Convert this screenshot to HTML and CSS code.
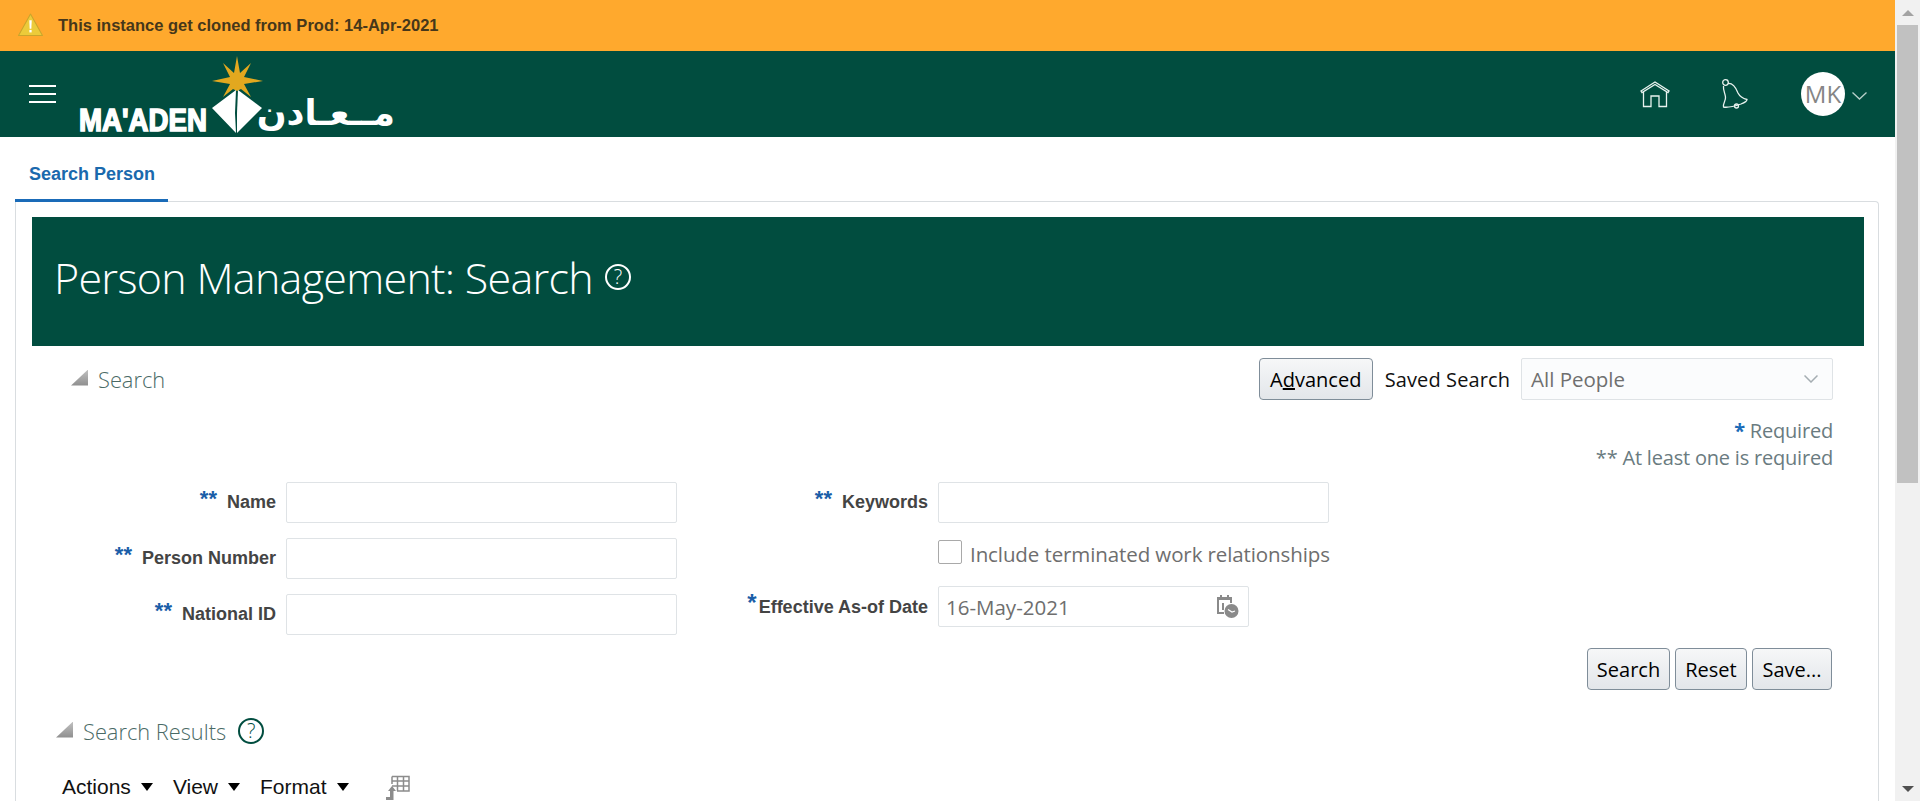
FILE: index.html
```html
<!DOCTYPE html>
<html lang="en">

<head>
    <meta charset="UTF-8">
    <title>Person Management: Search</title>
    <link rel="stylesheet" href="styles.css">
</head>

<body>
    <div class="page">
        <!-- notice -->
        <div class="notice">
            <svg class="notice-icon" viewBox="0 0 24 22" width="25" height="23">
                <path d="M12 1 L23.5 21.5 H0.5 Z" fill="#eccb3a" stroke="#c9a52c" stroke-width="1" stroke-linejoin="round"/>
                <path d="M10.8 7 H13.2 L12.8 15 H11.2 Z" fill="#fff"/>
                <rect x="10.9" y="16.2" width="2.2" height="2.4" fill="#fff"/>
            </svg>
            <span>This instance get cloned from Prod: 14-Apr-2021</span>
        </div>

        <!-- top bar -->
        <header class="topbar">
            <div class="menu-btn"><span></span><span></span><span></span></div>
            <svg class="logo" viewBox="0 0 330 86" width="330" height="86">
                <path fill="#e2a81f" d="M162 5 L165 22 L176 12 L169 26 L188 30 L169 33 L176 46 L166 38 L162 40 L158 38 L148 46 L155 33 L137 30 L155 26 L148 12 L159 22 Z"/>
                <path fill="#fff" d="M161 39 L137 57 L161 82 L160 62 Z"/>
                <path fill="#fff" d="M163 39 L187 57 L162 82 L162 62 Z"/>
                <text class="logo-en" x="4" y="80" textLength="128" lengthAdjust="spacingAndGlyphs">MA'ADEN</text>
                <text class="logo-ar" x="320" y="74" text-anchor="end">مــعـادن</text>
            </svg>
            <div class="top-actions">
                <svg class="home-icon" viewBox="0 0 30 27" width="30" height="27">
                    <path d="M1 10 L15 1 L29 10 L28 11.5 L15 3.5 L2 11.5 Z"/>
                    <path d="M3.5 11 V25.5 H11 V15 H19 V25.5 H26.500 V11"/>
                </svg>
                <svg class="bell-icon" viewBox="0 0 28 30" width="28" height="30">
                    <circle cx="4.500" cy="3.500" r="2.800"/>
                    <path d="M7 4.500 C12 4 15 9 17 14 C19 18 24 20 26 20.500 C26 22 24 23.500 20 25 C14 27 7 29 2.500 28 C1.500 25 5 22 4.500 18 C4 14 2 11 2.500 7"/>
                    <circle cx="15.500" cy="27" r="2"/>
                </svg>
                <div class="avatar">MK</div>
                <svg class="chevron-icon" viewBox="0 0 15 8" width="15" height="8">
                    <path d="M0.500 0.500 L7.500 7 L14.500 0.500"/>
                </svg>
            </div>
        </header>

        <nav class="tabs">
            <a class="tab-active">Search Person</a>
        </nav>

        <main class="panel">
            <div class="title-bar">
                <h1>Person Management: Search</h1>
                <span class="help help-light">?</span>
            </div>

            <section class="search-box">
                <div class="search-head">
                    <h2 class="section-title"><i class="disclosure"></i>Search</h2>
                    <div class="saved-search">
                        <button class="btn btn-advanced">A<u>d</u>vanced</button>
                        <span class="saved-label">Saved Search</span>
                        <div class="select">
                            <span>All People</span>
                            <svg viewBox="0 0 14 8" width="14" height="8"><path d="M0.500 0.500 L7 7 L13.500 0.500"/></svg>
                        </div>
                    </div>
                </div>

                <div class="legend">
                    <div><b>*</b> Required</div>
                    <div>** At least one is required</div>
                </div>

                <div class="form-grid">
                    <div class="form-col col-left">
                        <label class="field">
                            <span class="field-label"><b class="star">**</b>Name</span>
                            <input class="input" type="text">
                        </label>
                        <label class="field">
                            <span class="field-label"><b class="star">**</b>Person Number</span>
                            <input class="input" type="text">
                        </label>
                        <label class="field">
                            <span class="field-label"><b class="star">**</b>National ID</span>
                            <input class="input" type="text">
                        </label>
                    </div>
                    <div class="form-col col-right">
                        <label class="field">
                            <span class="field-label"><b class="star">**</b>Keywords</span>
                            <input class="input" type="text">
                        </label>
                        <div class="check-row">
                            <span class="checkbox"></span>
                            <span>Include terminated work relationships</span>
                        </div>
                        <label class="field">
                            <span class="field-label"><b class="star star-one">*</b>Effective As-of Date</span>
                            <div class="date-input">
                                <span>16-May-2021</span>
                                <svg viewBox="0 0 25 25" width="25" height="25">
                                    <path fill="#8a8a8a" d="M3 3 H6 V1 H8 V3 H13 V1 H15 V3 H18 V9 H16 V6 H5 V18 H10 V20 H3 Z"/>
                                    <path fill="#8a8a8a" d="M8 9 H10 V16 H8 Z"/>
                                    <circle cx="17.500" cy="17" r="7" fill="#8a8a8a"/>
                                    <path d="M14 15.500 L18 18 L21 17" fill="none" stroke="#fff" stroke-width="1.200"/>
                                </svg>
                            </div>
                        </label>
                    </div>
                </div>

                <div class="form-buttons">
                    <button class="btn btn-search">Search</button>
                    <button class="btn btn-reset">Reset</button>
                    <button class="btn btn-save">Save...</button>
                </div>
            </section>

            <section class="results">
                <div class="results-head">
                    <h2 class="section-title"><i class="disclosure"></i>Search Results</h2>
                    <span class="help help-dark">?</span>
                </div>
                <div class="toolbar">
                    <span class="tool">Actions<i class="caret"></i></span>
                    <span class="tool">View<i class="caret"></i></span>
                    <span class="tool">Format<i class="caret"></i></span>
                    <svg class="table-icon" viewBox="0 0 24 26" width="24" height="26">
                        <path fill="none" stroke="#8c8c8c" stroke-width="1.500" d="M6 1.500 H23 V16 H11 M6 1.500 V9 M6 6 H23 M11.500 1.500 V16 M17.500 1.500 V16 M6 11 H23"/>
                        <path fill="#8c8c8c" d="M0 22 H4 V16 H2 L6 11 L10 16 H7.500 V25 H0 Z"/>
                    </svg>
                </div>
            </section>
        </main>
    </div>

    <!-- scrollbar -->
    <aside class="scrollbar">
        <div class="scroll-btn"><i class="scroll-up"></i></div>
        <div class="scroll-track"><div class="scroll-thumb"></div></div>
        <div class="scroll-btn"><i class="scroll-down"></i></div>
    </aside>
</body>

</html>
```

FILE: styles.css
```css
/* page */
html, body {
    height: 100%;
}

body {
    margin: 0;
    display: flex;
    overflow: hidden;
    background-color: #fff;
    font-family: "Liberation Sans", Arial, sans-serif;
    color: #333;
}

.page {
    flex: 1;
    min-width: 0;
    height: 801px;
    overflow: hidden;
}

/* notice */
.notice {
    height: 51px;
    display: flex;
    align-items: center;
    padding-left: 18px;
    background-color: #ffa92d;
    color: #46371a;
    font-size: 16.5px;
    font-weight: bold;
}

.notice-icon {
    margin-right: 15px;
    margin-top: -3px;
}

/* top bar */
.topbar {
    height: 86px;
    display: flex;
    align-items: center;
    background-color: #014d3f;
}

.menu-btn {
    display: flex;
    flex-direction: column;
    gap: 6px;
    width: 27px;
    margin-left: 29px;
}

.menu-btn span {
    height: 2px;
    background-color: #fff;
}

.logo {
    margin-left: 19px;
    align-self: flex-start;
}

.logo-en {
    font-family: "Liberation Sans", Arial, sans-serif;
    font-size: 32px;
    font-weight: bold;
    fill: #fff;
    stroke: #fff;
    stroke-width: 1.6px;
}

.logo-ar {
    font-family: "DejaVu Sans", sans-serif;
    font-size: 35px;
    font-weight: bold;
    fill: #fff;
}

.top-actions {
    margin-left: auto;
    display: flex;
    align-items: center;
    padding-right: 28px;
}

.home-icon path, .bell-icon path, .bell-icon circle {
    fill: none;
    stroke: #e8f2ef;
    stroke-width: 1.3;
}

.bell-icon {
    margin-left: 51px;
}

.avatar {
    width: 44px;
    height: 44px;
    margin-left: 52px;
    border-radius: 50%;
    background-color: #fff;
    color: #858585;
    font-family: "Open Sans", sans-serif;
    font-size: 24px;
    line-height: 44px;
    text-align: center;
}

.chevron-icon {
    margin-left: 7px;
    margin-top: 4px;
}

.chevron-icon path {
    fill: none;
    stroke: #b7cfc9;
    stroke-width: 1.3;
}

/* tabs */
.tabs {
    height: 65px;
    margin: 0 16px 0 15px;
    box-sizing: border-box;
    display: flex;
}

.tab-active {
    width: 153px;
    box-sizing: border-box;
    padding: 27px 0 0 14px;
    border-bottom: 3px solid #1a6bb8;
    color: #1a69ad;
    font-size: 18px;
    font-weight: bold;
    line-height: 20px;
}

/* main panel */
.panel {
    margin: 0 16px 0 15px;
    height: 640px;
    box-sizing: border-box;
    padding: 15px 14px 0 16px;
    border: 1px solid #d9dde0;
    border-bottom: none;
    border-radius: 0 4px 0 0;
    margin-top: -1px;
}

.title-bar {
    height: 129px;
    display: flex;
    align-items: center;
    padding-left: 22px;
    padding-bottom: 9px;
    box-sizing: border-box;
    background-color: #014d3f;
    color: #fff;
}

h1 {
    margin: 0;
    font-family: "Open Sans", sans-serif;
    font-size: 43px;
    font-weight: 300;
    letter-spacing: -0.7px;
}

.help {
    display: block;
    border-radius: 50%;
    box-sizing: border-box;
    text-align: center;
    font-family: "Open Sans", sans-serif;
    font-weight: 300;
}

.help-light {
    width: 26px;
    height: 26px;
    margin-left: 12px;
    border: 2px solid #fff;
    font-size: 20px;
    line-height: 22px;
}

.help-dark {
    width: 26px;
    height: 26px;
    margin-left: 12px;
    border: 2px solid #014d3f;
    color: #014d3f;
    font-size: 20px;
    line-height: 22px;
}

.search-box {
    padding-top: 12px;
}

.search-head {
    display: flex;
    justify-content: space-between;
    height: 42px;
    padding: 0 31px 0 39px;
}

.section-title {
    margin: 0;
    display: flex;
    align-items: center;
    font-family: "Open Sans", sans-serif;
    font-size: 21.800px;
    font-weight: 300;
    color: #4a6a66;
}

.disclosure {
    display: block;
    width: 17px;
    height: 16px;
    margin-right: 10px;
    margin-top: -3px;
    background: linear-gradient(#c0c0c0, #8e8e8e);
    clip-path: polygon(100% 0, 100% 100%, 0 100%);
}

.saved-search {
    display: flex;
    align-items: center;
}

.btn {
    height: 42px;
    box-sizing: border-box;
    padding: 0;
    border: 1px solid #7f8d99;
    border-radius: 4px;
    background: linear-gradient(#f6f7f8, #e3e6ea);
    color: #000;
    font-family: "Open Sans", sans-serif;
    font-size: 20px;
}

.btn-advanced {
    width: 114px;
}

.saved-label {
    margin-left: 12px;
    color: #111;
    font-family: "Open Sans", sans-serif;
    font-size: 20px;
    letter-spacing: 0.1px;
}

.select {
    width: 312px;
    height: 42px;
    margin-left: 11px;
    box-sizing: border-box;
    display: flex;
    align-items: center;
    justify-content: space-between;
    padding: 0 14px 0 9px;
    border: 1px solid #dfe3e6;
    border-radius: 2px;
    background-color: #fbfcfd;
    color: #6f6f6f;
    font-family: "Open Sans", sans-serif;
    font-size: 20.500px;
}

.select path {
    fill: none;
    stroke: #a5adb2;
    stroke-width: 1.500;
}

.legend {
    padding: 17px 31px 0 0;
    text-align: right;
    color: #6a7b80;
    font-family: "Open Sans", sans-serif;
    font-size: 20px;
    letter-spacing: -0.2px;
    line-height: 27px;
}

.legend b {
    color: #1a6bb8;
}

/* form */
.form-grid {
    display: flex;
    margin-top: 11px;
}

.form-col {
    display: flex;
    flex-direction: column;
}

.col-left {
    width: 645px;
    gap: 15px;
}

.field {
    display: flex;
    justify-content: flex-end;
    align-items: center;
}

.field-label {
    display: flex;
    align-items: baseline;
    margin-right: 10px;
    margin-top: -3px;
    color: #444;
    font-size: 18px;
    font-weight: bold;
}

.star {
    margin-right: 10px;
    color: #1a5ea8;
    font-size: 22px;
    position: relative;
    top: -2px;
}

.star-one {
    margin-right: 2px;
    font-size: 24px;
}

.input {
    width: 391px;
    height: 41px;
    box-sizing: border-box;
    border: 1px solid #dfe3e6;
    border-radius: 2px;
    background-color: #fff;
}

.col-right {
    width: 680px;
    align-items: flex-start;
}

.col-right .field {
    justify-content: flex-start;
}

.col-right .field-label {
    width: 251px;
    justify-content: flex-end;
    box-sizing: border-box;
    margin-right: 10px;
    flex: none;
}

.check-row {
    height: 63px;
    display: flex;
    align-items: center;
    margin-left: 261px;
    white-space: nowrap;
    color: #6e6e6e;
    font-family: "Open Sans", sans-serif;
    font-size: 20.500px;
    letter-spacing: -0.1px;
    font-weight: 500;
}

.check-row span:last-child {
    margin-top: -2px;
}

.checkbox {
    width: 24px;
    height: 24px;
    margin-right: 8px;
    margin-top: -6px;
    box-sizing: border-box;
    border: 1px solid #a9a9a9;
    border-radius: 2px;
    background-color: #fff;
}

.date-input {
    width: 311px;
    height: 41px;
    box-sizing: border-box;
    display: flex;
    align-items: center;
    justify-content: space-between;
    padding: 0 9px 0 7px;
    border: 1px solid #dfe3e6;
    border-radius: 2px;
    color: #6e6e6e;
    font-family: "Open Sans", sans-serif;
    font-size: 20.500px;
}

.form-buttons {
    display: flex;
    justify-content: flex-end;
    gap: 5px;
    margin-top: 13px;
    padding-right: 32px;
}

.btn-search {
    width: 83px;
}

.btn-reset {
    width: 72px;
}

.btn-save {
    width: 80px;
}

/* results */
.results-head {
    display: flex;
    align-items: center;
    height: 26px;
    margin-top: 28px;
    padding-left: 24px;
}

.toolbar {
    display: flex;
    align-items: center;
    height: 30px;
    margin-top: 28px;
    padding-left: 30px;
}

.tool {
    display: flex;
    align-items: center;
    margin-right: 20px;
    color: #111;
    font-size: 21px;
}

.caret {
    display: block;
    width: 0;
    height: 0;
    margin-left: 10px;
    border-style: solid;
    border-width: 8px 6.500px 0;
    border-color: #000 transparent transparent;
}

.table-icon {
    margin-left: 17px;
    margin-top: 2px;
}

/* scrollbar */
.scrollbar {
    width: 25px;
    height: 801px;
    flex: none;
    display: flex;
    flex-direction: column;
    background-color: #f1f1f1;
}

.scroll-btn {
    height: 25px;
    display: flex;
    align-items: center;
    justify-content: center;
    flex: none;
}

.scroll-up, .scroll-down {
    display: block;
    width: 0;
    height: 0;
    border-style: solid;
}

.scroll-up {
    border-width: 0 6px 6px;
    border-color: transparent transparent #a3a3a3;
}

.scroll-down {
    border-width: 6px 6px 0;
    border-color: #505050 transparent transparent;
}

.scroll-track {
    flex: 1;
    padding: 0 2px;
}

.scroll-thumb {
    height: 458px;
    background-color: #c1c1c1;
}
```
